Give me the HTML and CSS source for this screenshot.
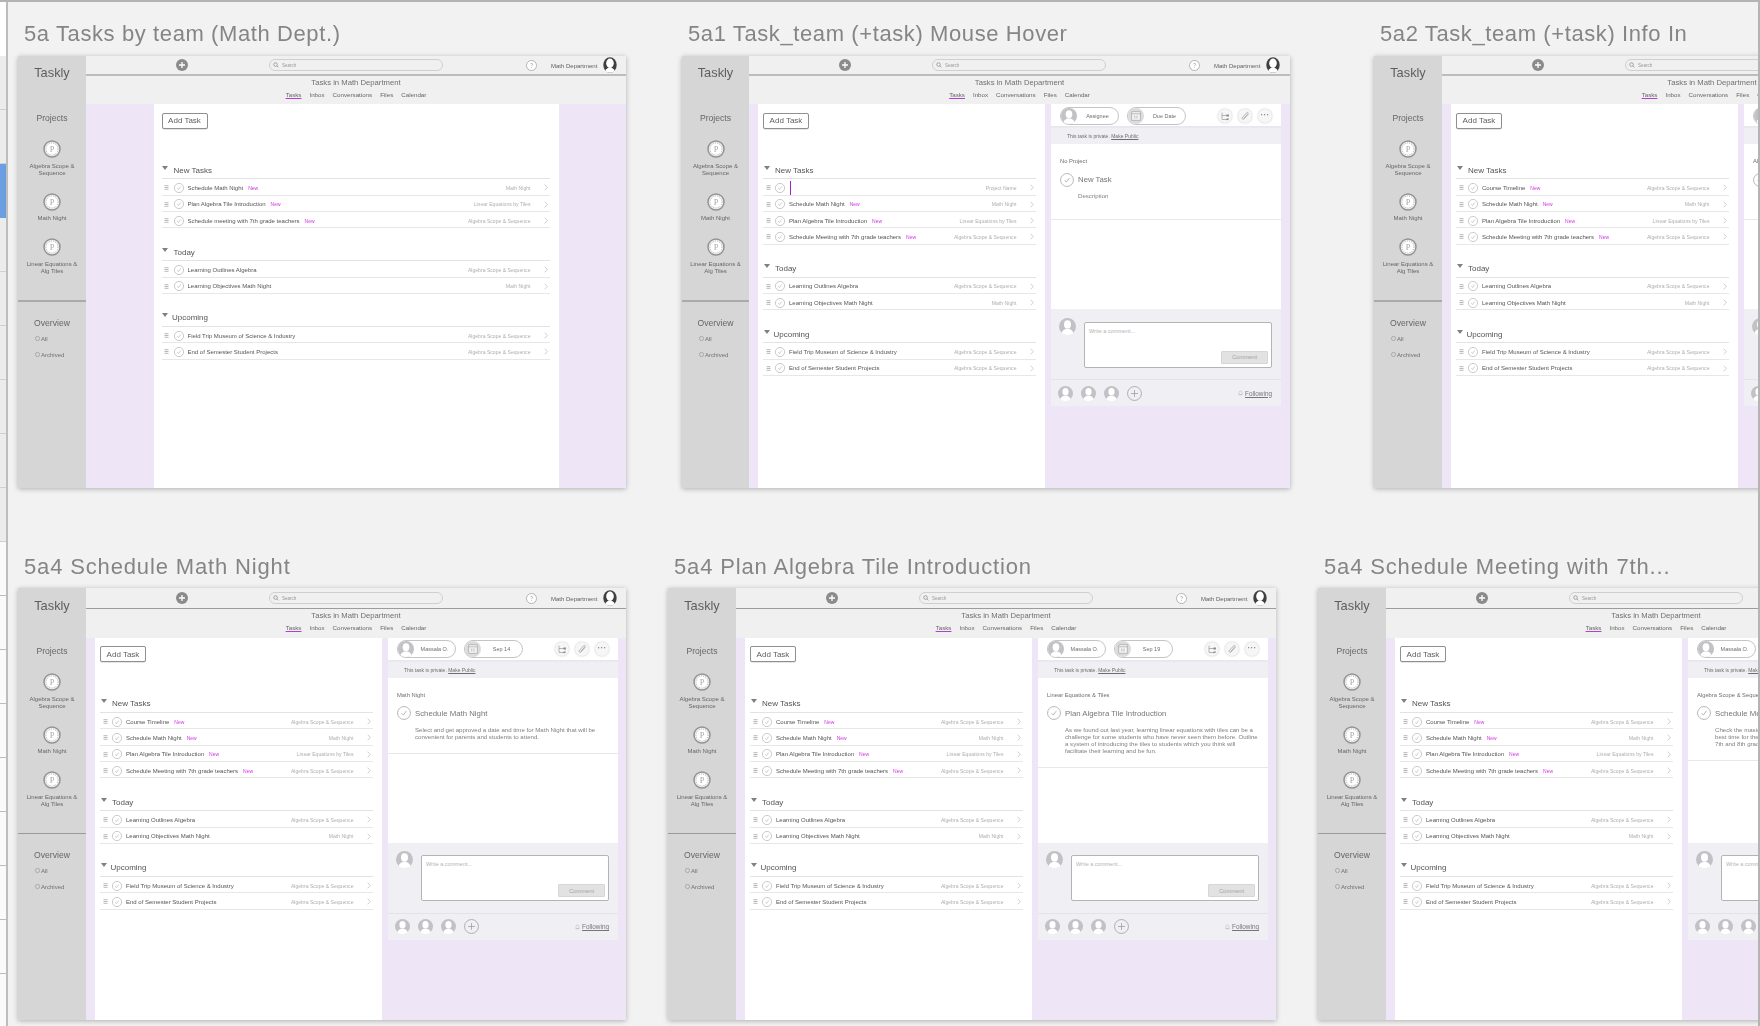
FILE: index.html
```html
<!DOCTYPE HTML>
<html><head>
  <meta charset="utf-8">
  <title>Taskly artboards</title>
  <link rel="stylesheet" href="styles.css">
</head>
<body>

<svg class="defs" xmlns="http://www.w3.org/2000/svg">
  <symbol id="badge" viewBox="0 0 18 18"><circle cx="9" cy="9" r="8" fill="#f4f4f4" stroke="#939393" stroke-width="1.5"/><circle cx="9" cy="9" r="6" fill="#fff" stroke="#a5a5a5" stroke-width=".9" stroke-dasharray="1 1.2"/><text x="9" y="12" text-anchor="middle" font-family="Liberation Serif" font-size="8.5" fill="#aaa">P</text></symbol>
  <symbol id="plus" viewBox="0 0 12 12"><circle cx="6" cy="6" r="6" fill="#8b8b8b"/><path d="M6 3v6M3 6h6" stroke="#fff" stroke-width="1.3"/></symbol>
  <symbol id="search" viewBox="0 0 8 8"><circle cx="3.4" cy="3.4" r="2.4" fill="none" stroke="#777" stroke-width=".8"/><path d="M5.2 5.2l2 2" stroke="#777" stroke-width=".8"/></symbol>
  <symbol id="help" viewBox="0 0 11 11"><circle cx="5.5" cy="5.5" r="5" fill="#fff" stroke="#999" stroke-width=".7"/><path d="M4.3 4.2c.2-1 2.300-1 2.400.100 0 .8-1.200.9-1.200 1.800M5.500 7.300v.7" fill="none" stroke="#888" stroke-width=".6"/></symbol>
  <symbol id="owner" viewBox="0 0 14 16"><ellipse cx="7" cy="8" rx="6.700" ry="7.700" fill="#3f3f3f"/><ellipse cx="7" cy="6.300" rx="3.800" ry="4.700" fill="#fff"/><path d="M2.300 14c.5-2 2.500-2.800 3.400-3.400h2.600c.9.600 2.900 1.400 3.400 3.400-1.200 1.200-3 1.700-4.700 1.700S3.500 15.200 2.300 14z" fill="#fff"/></symbol>
  <symbol id="drag" viewBox="0 0 5 5"><path d="M.5 .7h4M.5 2.500h4M.5 4.300h4" stroke="#999" stroke-width=".7"/></symbol>
  <symbol id="tick" viewBox="0 0 10 10"><circle cx="5" cy="5" r="4.600" fill="#fff" stroke="#aaa" stroke-width=".6"/><path d="M3.300 5.200l1.200 1.300 2.200-3" fill="none" stroke="#aaa" stroke-width=".6"/></symbol>
  <symbol id="chev" viewBox="0 0 4 7"><path d="M.7 .7l2.600 2.800-2.600 2.800" fill="none" stroke="#bbb" stroke-width=".7"/></symbol>
  <symbol id="person" viewBox="0 0 16 16"><circle cx="8" cy="8" r="8" fill="#c2c1c5"/><ellipse cx="8" cy="6.200" rx="3.300" ry="4" fill="#fff"/><path d="M2.500 14c.6-2.400 2.400-2.800 3.700-3.600h3.600c1.300.8 3.100 1.200 3.700 3.600-1.400 1.300-3.400 2-5.500 2s-4.100-.7-5.500-2z" fill="#fff"/></symbol>
  <symbol id="cal" viewBox="0 0 16 16"><circle cx="8" cy="8" r="8" fill="#dcdcdf"/><rect x="3.800" y="3.800" width="8.400" height="8.400" fill="#f4f4f4" stroke="#999" stroke-width=".6"/><path d="M3.800 5.800h8.400M6.800 7.500v3M9 7.500v3" stroke="#999" stroke-width=".6"/></symbol>
  <symbol id="tree" viewBox="0 0 10 10"><path d="M2 1.500v7h5M2 4.500h5" fill="none" stroke="#999" stroke-width=".7"/><rect x="6.500" y="3.500" width="2.400" height="2" fill="#888"/><rect x="6.500" y="7.500" width="2.400" height="2" fill="#888"/></symbol>
  <symbol id="clip" viewBox="0 0 10 10"><path d="M8.300 3.200L4 8c-1 1-2.600-.4-1.600-1.600L6.800 1.600c.7-.8 1.900.2 1.200 1.100L3.800 7.300" fill="none" stroke="#999" stroke-width=".7"/></symbol>
  <symbol id="add" viewBox="0 0 14 14"><circle cx="7" cy="7" r="6.500" fill="none" stroke="#a5a5a8" stroke-width=".8"/><path d="M7 3.800v6.400M3.800 7h6.400" stroke="#a5a5a8" stroke-width=".8"/></symbol>
  <symbol id="bell" viewBox="0 0 6 7"><path d="M1.200 5.500V2.800C1.200 .6 4.800 .6 4.800 2.800v2.700zM.7 5.500h4.600" fill="none" stroke="#aaa" stroke-width=".5"/></symbol>
</svg>

<div class="canvas">
<div class="layers">
  <div class="lyr"></div><div class="lyr"></div><div class="lyr sel"></div><div class="lyr"></div><div class="lyr"></div><div class="lyr"></div><div class="lyr"></div><div class="lyr"></div><div class="lyr"></div><div class="lyr w"></div><div class="lyr w"></div><div class="lyr w"></div><div class="lyr w"></div><div class="lyr w"></div><div class="lyr w"></div><div class="lyr w"></div><div class="lyr w"></div><div class="lyr w"></div><div class="lyr w"></div>
</div>

<!-- 5a -->
<section class="board b1">
  <h2 class="title">5a Tasks by team (Math Dept.)</h2>
  <div class="frame">
    <aside class="side">
      <div class="logo">Taskly</div>
      <div class="side-h">Projects</div>
      <div class="proj-item"><svg class="badge"><use href="#badge"/></svg><p>Algebra Scope &amp;<br>Sequence</p></div>
      <div class="proj-item"><svg class="badge"><use href="#badge"/></svg><p>Math Night</p></div>
      <div class="proj-item"><svg class="badge"><use href="#badge"/></svg><p>Linear Equations &amp;<br>Alg Tiles</p></div>
      <hr class="side-rule">
      <div class="side-h ov">Overview</div>
      <div class="ov-item">All</div>
      <div class="ov-item">Archived</div>
    </aside>
    <div class="main">
      <div class="topbar"><svg class="plus"><use href="#plus"/></svg><div class="search"><svg><use href="#search"/></svg>Search</div><svg class="help"><use href="#help"/></svg><span class="dept">Math Department</span><svg class="owner"><use href="#owner"/></svg></div>
      <div class="subhead"><div class="sub-title">Tasks in Math Department</div><nav class="tabs"><a class="on">Tasks</a><a>Inbox</a><a>Conversations</a><a>Files</a><a>Calendar</a></nav></div>
      <div class="content">
        <div class="list-col">
          <button class="add-task">Add Task</button>
          <h3 class="sec first">New Tasks</h3>
          <ul>
            <li><svg class="drag"><use href="#drag"/></svg><svg class="tick"><use href="#tick"/></svg><span>Schedule Math Night</span><b>New</b><i>Math Night</i><svg class="chev"><use href="#chev"/></svg></li>
            <li><svg class="drag"><use href="#drag"/></svg><svg class="tick"><use href="#tick"/></svg><span>Plan Algebra Tile Introduction</span><b>New</b><i>Linear Equations by Tiles</i><svg class="chev"><use href="#chev"/></svg></li>
            <li><svg class="drag"><use href="#drag"/></svg><svg class="tick"><use href="#tick"/></svg><span>Schedule meeting with 7th grade teachers</span><b>New</b><i>Algebra Scope &amp; Sequence</i><svg class="chev"><use href="#chev"/></svg></li>
          </ul>
          <h3 class="sec">Today</h3>
          <ul>
            <li><svg class="drag"><use href="#drag"/></svg><svg class="tick"><use href="#tick"/></svg><span>Learning Outlines Algebra</span><i>Algebra Scope &amp; Sequence</i><svg class="chev"><use href="#chev"/></svg></li>
            <li><svg class="drag"><use href="#drag"/></svg><svg class="tick"><use href="#tick"/></svg><span>Learning Objectives Math Night</span><i>Math Night</i><svg class="chev"><use href="#chev"/></svg></li>
          </ul>
          <h3 class="sec">Upcoming</h3>
          <ul>
            <li><svg class="drag"><use href="#drag"/></svg><svg class="tick"><use href="#tick"/></svg><span>Field Trip Museum of Science &amp; Industry</span><i>Algebra Scope &amp; Sequence</i><svg class="chev"><use href="#chev"/></svg></li>
            <li><svg class="drag"><use href="#drag"/></svg><svg class="tick"><use href="#tick"/></svg><span>End of Semester Student Projects</span><i>Algebra Scope &amp; Sequence</i><svg class="chev"><use href="#chev"/></svg></li>
          </ul>
        </div>
      </div>
    </div>
  </div>
</section>

<!-- 5a1 -->
<section class="board b2">
  <h2 class="title">5a1 Task_team (+task) Mouse Hover</h2>
  <div class="frame">
    <aside class="side">
      <div class="logo">Taskly</div>
      <div class="side-h">Projects</div>
      <div class="proj-item"><svg class="badge"><use href="#badge"/></svg><p>Algebra Scope &amp;<br>Sequence</p></div>
      <div class="proj-item"><svg class="badge"><use href="#badge"/></svg><p>Math Night</p></div>
      <div class="proj-item"><svg class="badge"><use href="#badge"/></svg><p>Linear Equations &amp;<br>Alg Tiles</p></div>
      <hr class="side-rule">
      <div class="side-h ov">Overview</div>
      <div class="ov-item">All</div>
      <div class="ov-item">Archived</div>
    </aside>
    <div class="main">
      <div class="topbar"><svg class="plus"><use href="#plus"/></svg><div class="search"><svg><use href="#search"/></svg>Search</div><svg class="help"><use href="#help"/></svg><span class="dept">Math Department</span><svg class="owner"><use href="#owner"/></svg></div>
      <div class="subhead"><div class="sub-title">Tasks in Math Department</div><nav class="tabs"><a class="on">Tasks</a><a>Inbox</a><a>Conversations</a><a>Files</a><a>Calendar</a></nav></div>
      <div class="content split">
        <div class="list-col">
          <button class="add-task">Add Task</button>
          <h3 class="sec first">New Tasks</h3>
          <ul>
            <li><svg class="drag"><use href="#drag"/></svg><svg class="tick"><use href="#tick"/></svg><span class="caret"></span><i>Project Name</i><svg class="chev"><use href="#chev"/></svg></li>
            <li><svg class="drag"><use href="#drag"/></svg><svg class="tick"><use href="#tick"/></svg><span>Schedule Math Night</span><b>New</b><i>Math Night</i><svg class="chev"><use href="#chev"/></svg></li>
            <li><svg class="drag"><use href="#drag"/></svg><svg class="tick"><use href="#tick"/></svg><span>Plan Algebra Tile Introduction</span><b>New</b><i>Linear Equations by Tiles</i><svg class="chev"><use href="#chev"/></svg></li>
            <li><svg class="drag"><use href="#drag"/></svg><svg class="tick"><use href="#tick"/></svg><span>Schedule Meeting with 7th grade teachers</span><b>New</b><i>Algebra Scope &amp; Sequence</i><svg class="chev"><use href="#chev"/></svg></li>
          </ul>
          <h3 class="sec">Today</h3>
          <ul>
            <li><svg class="drag"><use href="#drag"/></svg><svg class="tick"><use href="#tick"/></svg><span>Learning Outlines Algebra</span><i>Algebra Scope &amp; Sequence</i><svg class="chev"><use href="#chev"/></svg></li>
            <li><svg class="drag"><use href="#drag"/></svg><svg class="tick"><use href="#tick"/></svg><span>Learning Objectives Math Night</span><i>Math Night</i><svg class="chev"><use href="#chev"/></svg></li>
          </ul>
          <h3 class="sec">Upcoming</h3>
          <ul>
            <li><svg class="drag"><use href="#drag"/></svg><svg class="tick"><use href="#tick"/></svg><span>Field Trip Museum of Science &amp; Industry</span><i>Algebra Scope &amp; Sequence</i><svg class="chev"><use href="#chev"/></svg></li>
            <li><svg class="drag"><use href="#drag"/></svg><svg class="tick"><use href="#tick"/></svg><span>End of Semester Student Projects</span><i>Algebra Scope &amp; Sequence</i><svg class="chev"><use href="#chev"/></svg></li>
          </ul>
        </div>
        <div class="detail">
          <div class="d-head"><div class="pill"><svg><use href="#person"/></svg><span>Assignee</span></div><div class="pill"><svg><use href="#cal"/></svg><span>Due Date</span></div><div class="d-tools"><svg><use href="#tree"/></svg><svg><use href="#clip"/></svg><em>&middot;&middot;&middot;</em></div></div>
          <div class="strip">This task is private. <u>Make Public</u></div>
          <div class="d-body"><div class="task"><div class="t-proj">No Project</div><div class="t-name"><svg><use href="#tick"/></svg>New Task</div><p class="t-desc">Description</p></div></div>
          <div class="d-comment"><svg class="c-av"><use href="#person"/></svg><div class="c-box"><span>Write a comment...</span><button>Comment</button></div></div>
          <div class="d-foot"><svg><use href="#person"/></svg><svg><use href="#person"/></svg><svg><use href="#person"/></svg><svg class="f-add"><use href="#add"/></svg><span class="follow"><svg><use href="#bell"/></svg><u>Following</u></span></div>
        </div>
      </div>
    </div>
  </div>
</section>

<!-- 5a2 -->
<section class="board b3">
  <h2 class="title">5a2 Task_team (+task) Info In</h2>
  <div class="frame">
    <aside class="side">
      <div class="logo">Taskly</div>
      <div class="side-h">Projects</div>
      <div class="proj-item"><svg class="badge"><use href="#badge"/></svg><p>Algebra Scope &amp;<br>Sequence</p></div>
      <div class="proj-item"><svg class="badge"><use href="#badge"/></svg><p>Math Night</p></div>
      <div class="proj-item"><svg class="badge"><use href="#badge"/></svg><p>Linear Equations &amp;<br>Alg Tiles</p></div>
      <hr class="side-rule">
      <div class="side-h ov">Overview</div>
      <div class="ov-item">All</div>
      <div class="ov-item">Archived</div>
    </aside>
    <div class="main">
      <div class="topbar"><svg class="plus"><use href="#plus"/></svg><div class="search"><svg><use href="#search"/></svg>Search</div><svg class="help"><use href="#help"/></svg><span class="dept">Math Department</span><svg class="owner"><use href="#owner"/></svg></div>
      <div class="subhead"><div class="sub-title">Tasks in Math Department</div><nav class="tabs"><a class="on">Tasks</a><a>Inbox</a><a>Conversations</a><a>Files</a><a>Calendar</a></nav></div>
      <div class="content split">
        <div class="list-col">
          <button class="add-task">Add Task</button>
          <h3 class="sec first">New Tasks</h3>
          <ul>
            <li><svg class="drag"><use href="#drag"/></svg><svg class="tick"><use href="#tick"/></svg><span>Course Timeline</span><b>New</b><i>Algebra Scope &amp; Sequence</i><svg class="chev"><use href="#chev"/></svg></li>
            <li><svg class="drag"><use href="#drag"/></svg><svg class="tick"><use href="#tick"/></svg><span>Schedule Math Night</span><b>New</b><i>Math Night</i><svg class="chev"><use href="#chev"/></svg></li>
            <li><svg class="drag"><use href="#drag"/></svg><svg class="tick"><use href="#tick"/></svg><span>Plan Algebra Tile Introduction</span><b>New</b><i>Linear Equations by Tiles</i><svg class="chev"><use href="#chev"/></svg></li>
            <li><svg class="drag"><use href="#drag"/></svg><svg class="tick"><use href="#tick"/></svg><span>Schedule Meeting with 7th grade teachers</span><b>New</b><i>Algebra Scope &amp; Sequence</i><svg class="chev"><use href="#chev"/></svg></li>
          </ul>
          <h3 class="sec">Today</h3>
          <ul>
            <li><svg class="drag"><use href="#drag"/></svg><svg class="tick"><use href="#tick"/></svg><span>Learning Outlines Algebra</span><i>Algebra Scope &amp; Sequence</i><svg class="chev"><use href="#chev"/></svg></li>
            <li><svg class="drag"><use href="#drag"/></svg><svg class="tick"><use href="#tick"/></svg><span>Learning Objectives Math Night</span><i>Math Night</i><svg class="chev"><use href="#chev"/></svg></li>
          </ul>
          <h3 class="sec">Upcoming</h3>
          <ul>
            <li><svg class="drag"><use href="#drag"/></svg><svg class="tick"><use href="#tick"/></svg><span>Field Trip Museum of Science &amp; Industry</span><i>Algebra Scope &amp; Sequence</i><svg class="chev"><use href="#chev"/></svg></li>
            <li><svg class="drag"><use href="#drag"/></svg><svg class="tick"><use href="#tick"/></svg><span>End of Semester Student Projects</span><i>Algebra Scope &amp; Sequence</i><svg class="chev"><use href="#chev"/></svg></li>
          </ul>
        </div>
        <div class="detail">
          <div class="d-head"><div class="pill"><svg><use href="#person"/></svg><span>Assignee</span></div></div>
          <div class="strip"></div>
          <div class="d-body"><div class="task"><div class="t-proj">Algebra Scope &amp; Sequence</div><div class="t-name"><svg><use href="#tick"/></svg>Course Timeline</div></div></div>
          <div class="d-comment"><svg class="c-av"><use href="#person"/></svg></div>
          <div class="d-foot"><svg><use href="#person"/></svg></div>
        </div>
      </div>
    </div>
  </div>
</section>

<!-- 5a4 -->
<section class="board b4 thin">
  <h2 class="title">5a4 Schedule Math Night</h2>
  <div class="frame">
    <aside class="side">
      <div class="logo">Taskly</div>
      <div class="side-h">Projects</div>
      <div class="proj-item"><svg class="badge"><use href="#badge"/></svg><p>Algebra Scope &amp;<br>Sequence</p></div>
      <div class="proj-item"><svg class="badge"><use href="#badge"/></svg><p>Math Night</p></div>
      <div class="proj-item"><svg class="badge"><use href="#badge"/></svg><p>Linear Equations &amp;<br>Alg Tiles</p></div>
      <hr class="side-rule">
      <div class="side-h ov">Overview</div>
      <div class="ov-item">All</div>
      <div class="ov-item">Archived</div>
    </aside>
    <div class="main">
      <div class="topbar"><svg class="plus"><use href="#plus"/></svg><div class="search"><svg><use href="#search"/></svg>Search</div><svg class="help"><use href="#help"/></svg><span class="dept">Math Department</span><svg class="owner"><use href="#owner"/></svg></div>
      <div class="subhead"><div class="sub-title">Tasks in Math Department</div><nav class="tabs"><a class="on">Tasks</a><a>Inbox</a><a>Conversations</a><a>Files</a><a>Calendar</a></nav></div>
      <div class="content split">
        <div class="list-col">
          <button class="add-task">Add Task</button>
          <h3 class="sec first">New Tasks</h3>
          <ul>
            <li><svg class="drag"><use href="#drag"/></svg><svg class="tick"><use href="#tick"/></svg><span>Course Timeline</span><b>New</b><i>Algebra Scope &amp; Sequence</i><svg class="chev"><use href="#chev"/></svg></li>
            <li><svg class="drag"><use href="#drag"/></svg><svg class="tick"><use href="#tick"/></svg><span>Schedule Math Night</span><b>New</b><i>Math Night</i><svg class="chev"><use href="#chev"/></svg></li>
            <li><svg class="drag"><use href="#drag"/></svg><svg class="tick"><use href="#tick"/></svg><span>Plan Algebra Tile Introduction</span><b>New</b><i>Linear Equations by Tiles</i><svg class="chev"><use href="#chev"/></svg></li>
            <li><svg class="drag"><use href="#drag"/></svg><svg class="tick"><use href="#tick"/></svg><span>Schedule Meeting with 7th grade teachers</span><b>New</b><i>Algebra Scope &amp; Sequence</i><svg class="chev"><use href="#chev"/></svg></li>
          </ul>
          <h3 class="sec">Today</h3>
          <ul>
            <li><svg class="drag"><use href="#drag"/></svg><svg class="tick"><use href="#tick"/></svg><span>Learning Outlines Algebra</span><i>Algebra Scope &amp; Sequence</i><svg class="chev"><use href="#chev"/></svg></li>
            <li><svg class="drag"><use href="#drag"/></svg><svg class="tick"><use href="#tick"/></svg><span>Learning Objectives Math Night</span><i>Math Night</i><svg class="chev"><use href="#chev"/></svg></li>
          </ul>
          <h3 class="sec">Upcoming</h3>
          <ul>
            <li><svg class="drag"><use href="#drag"/></svg><svg class="tick"><use href="#tick"/></svg><span>Field Trip Museum of Science &amp; Industry</span><i>Algebra Scope &amp; Sequence</i><svg class="chev"><use href="#chev"/></svg></li>
            <li><svg class="drag"><use href="#drag"/></svg><svg class="tick"><use href="#tick"/></svg><span>End of Semester Student Projects</span><i>Algebra Scope &amp; Sequence</i><svg class="chev"><use href="#chev"/></svg></li>
          </ul>
        </div>
        <div class="detail">
          <div class="d-head"><div class="pill"><svg><use href="#person"/></svg><span>Massala O.</span></div><div class="pill"><svg><use href="#cal"/></svg><span>Sep 14</span></div><div class="d-tools"><svg><use href="#tree"/></svg><svg><use href="#clip"/></svg><em>&middot;&middot;&middot;</em></div></div>
          <div class="strip">This task is private. <u>Make Public</u></div>
          <div class="d-body"><div class="task"><div class="t-proj">Math Night</div><div class="t-name"><svg><use href="#tick"/></svg>Schedule Math Night</div><p class="t-desc">Select and get approved a date and time for Math Night that will be<br>convenient for parents and students to attend.</p></div></div>
          <div class="d-comment"><svg class="c-av"><use href="#person"/></svg><div class="c-box"><span>Write a comment...</span><button>Comment</button></div></div>
          <div class="d-foot"><svg><use href="#person"/></svg><svg><use href="#person"/></svg><svg><use href="#person"/></svg><svg class="f-add"><use href="#add"/></svg><span class="follow"><svg><use href="#bell"/></svg><u>Following</u></span></div>
        </div>
      </div>
    </div>
  </div>
</section>

<!-- 5a4 -->
<section class="board b5 thin">
  <h2 class="title">5a4 Plan Algebra Tile Introduction</h2>
  <div class="frame">
    <aside class="side">
      <div class="logo">Taskly</div>
      <div class="side-h">Projects</div>
      <div class="proj-item"><svg class="badge"><use href="#badge"/></svg><p>Algebra Scope &amp;<br>Sequence</p></div>
      <div class="proj-item"><svg class="badge"><use href="#badge"/></svg><p>Math Night</p></div>
      <div class="proj-item"><svg class="badge"><use href="#badge"/></svg><p>Linear Equations &amp;<br>Alg Tiles</p></div>
      <hr class="side-rule">
      <div class="side-h ov">Overview</div>
      <div class="ov-item">All</div>
      <div class="ov-item">Archived</div>
    </aside>
    <div class="main">
      <div class="topbar"><svg class="plus"><use href="#plus"/></svg><div class="search"><svg><use href="#search"/></svg>Search</div><svg class="help"><use href="#help"/></svg><span class="dept">Math Department</span><svg class="owner"><use href="#owner"/></svg></div>
      <div class="subhead"><div class="sub-title">Tasks in Math Department</div><nav class="tabs"><a class="on">Tasks</a><a>Inbox</a><a>Conversations</a><a>Files</a><a>Calendar</a></nav></div>
      <div class="content split">
        <div class="list-col">
          <button class="add-task">Add Task</button>
          <h3 class="sec first">New Tasks</h3>
          <ul>
            <li><svg class="drag"><use href="#drag"/></svg><svg class="tick"><use href="#tick"/></svg><span>Course Timeline</span><b>New</b><i>Algebra Scope &amp; Sequence</i><svg class="chev"><use href="#chev"/></svg></li>
            <li><svg class="drag"><use href="#drag"/></svg><svg class="tick"><use href="#tick"/></svg><span>Schedule Math Night</span><b>New</b><i>Math Night</i><svg class="chev"><use href="#chev"/></svg></li>
            <li><svg class="drag"><use href="#drag"/></svg><svg class="tick"><use href="#tick"/></svg><span>Plan Algebra Tile Introduction</span><b>New</b><i>Linear Equations by Tiles</i><svg class="chev"><use href="#chev"/></svg></li>
            <li><svg class="drag"><use href="#drag"/></svg><svg class="tick"><use href="#tick"/></svg><span>Schedule Meeting with 7th grade teachers</span><b>New</b><i>Algebra Scope &amp; Sequence</i><svg class="chev"><use href="#chev"/></svg></li>
          </ul>
          <h3 class="sec">Today</h3>
          <ul>
            <li><svg class="drag"><use href="#drag"/></svg><svg class="tick"><use href="#tick"/></svg><span>Learning Outlines Algebra</span><i>Algebra Scope &amp; Sequence</i><svg class="chev"><use href="#chev"/></svg></li>
            <li><svg class="drag"><use href="#drag"/></svg><svg class="tick"><use href="#tick"/></svg><span>Learning Objectives Math Night</span><i>Math Night</i><svg class="chev"><use href="#chev"/></svg></li>
          </ul>
          <h3 class="sec">Upcoming</h3>
          <ul>
            <li><svg class="drag"><use href="#drag"/></svg><svg class="tick"><use href="#tick"/></svg><span>Field Trip Museum of Science &amp; Industry</span><i>Algebra Scope &amp; Sequence</i><svg class="chev"><use href="#chev"/></svg></li>
            <li><svg class="drag"><use href="#drag"/></svg><svg class="tick"><use href="#tick"/></svg><span>End of Semester Student Projects</span><i>Algebra Scope &amp; Sequence</i><svg class="chev"><use href="#chev"/></svg></li>
          </ul>
        </div>
        <div class="detail">
          <div class="d-head"><div class="pill"><svg><use href="#person"/></svg><span>Massala O.</span></div><div class="pill"><svg><use href="#cal"/></svg><span>Sep 19</span></div><div class="d-tools"><svg><use href="#tree"/></svg><svg><use href="#clip"/></svg><em>&middot;&middot;&middot;</em></div></div>
          <div class="strip">This task is private. <u>Make Public</u></div>
          <div class="d-body"><div class="task"><div class="t-proj">Linear Equations &amp; Tiles</div><div class="t-name"><svg><use href="#tick"/></svg>Plan Algebra Tile Introduction</div><p class="t-desc">As we found out last year, learning linear equations with tiles can be a<br>challenge for some students who have never seen them before. Outline<br>a system of introducing the tiles to students which you think will<br>facilitate their learning and be fun.</p></div></div>
          <div class="d-comment"><svg class="c-av"><use href="#person"/></svg><div class="c-box"><span>Write a comment...</span><button>Comment</button></div></div>
          <div class="d-foot"><svg><use href="#person"/></svg><svg><use href="#person"/></svg><svg><use href="#person"/></svg><svg class="f-add"><use href="#add"/></svg><span class="follow"><svg><use href="#bell"/></svg><u>Following</u></span></div>
        </div>
      </div>
    </div>
  </div>
</section>

<!-- 5a4 -->
<section class="board b6 thin">
  <h2 class="title">5a4 Schedule Meeting with 7th...</h2>
  <div class="frame">
    <aside class="side">
      <div class="logo">Taskly</div>
      <div class="side-h">Projects</div>
      <div class="proj-item"><svg class="badge"><use href="#badge"/></svg><p>Algebra Scope &amp;<br>Sequence</p></div>
      <div class="proj-item"><svg class="badge"><use href="#badge"/></svg><p>Math Night</p></div>
      <div class="proj-item"><svg class="badge"><use href="#badge"/></svg><p>Linear Equations &amp;<br>Alg Tiles</p></div>
      <hr class="side-rule">
      <div class="side-h ov">Overview</div>
      <div class="ov-item">All</div>
      <div class="ov-item">Archived</div>
    </aside>
    <div class="main">
      <div class="topbar"><svg class="plus"><use href="#plus"/></svg><div class="search"><svg><use href="#search"/></svg>Search</div><svg class="help"><use href="#help"/></svg><span class="dept">Math Department</span><svg class="owner"><use href="#owner"/></svg></div>
      <div class="subhead"><div class="sub-title">Tasks in Math Department</div><nav class="tabs"><a class="on">Tasks</a><a>Inbox</a><a>Conversations</a><a>Files</a><a>Calendar</a></nav></div>
      <div class="content split">
        <div class="list-col">
          <button class="add-task">Add Task</button>
          <h3 class="sec first">New Tasks</h3>
          <ul>
            <li><svg class="drag"><use href="#drag"/></svg><svg class="tick"><use href="#tick"/></svg><span>Course Timeline</span><b>New</b><i>Algebra Scope &amp; Sequence</i><svg class="chev"><use href="#chev"/></svg></li>
            <li><svg class="drag"><use href="#drag"/></svg><svg class="tick"><use href="#tick"/></svg><span>Schedule Math Night</span><b>New</b><i>Math Night</i><svg class="chev"><use href="#chev"/></svg></li>
            <li><svg class="drag"><use href="#drag"/></svg><svg class="tick"><use href="#tick"/></svg><span>Plan Algebra Tile Introduction</span><b>New</b><i>Linear Equations by Tiles</i><svg class="chev"><use href="#chev"/></svg></li>
            <li><svg class="drag"><use href="#drag"/></svg><svg class="tick"><use href="#tick"/></svg><span>Schedule Meeting with 7th grade teachers</span><b>New</b><i>Algebra Scope &amp; Sequence</i><svg class="chev"><use href="#chev"/></svg></li>
          </ul>
          <h3 class="sec">Today</h3>
          <ul>
            <li><svg class="drag"><use href="#drag"/></svg><svg class="tick"><use href="#tick"/></svg><span>Learning Outlines Algebra</span><i>Algebra Scope &amp; Sequence</i><svg class="chev"><use href="#chev"/></svg></li>
            <li><svg class="drag"><use href="#drag"/></svg><svg class="tick"><use href="#tick"/></svg><span>Learning Objectives Math Night</span><i>Math Night</i><svg class="chev"><use href="#chev"/></svg></li>
          </ul>
          <h3 class="sec">Upcoming</h3>
          <ul>
            <li><svg class="drag"><use href="#drag"/></svg><svg class="tick"><use href="#tick"/></svg><span>Field Trip Museum of Science &amp; Industry</span><i>Algebra Scope &amp; Sequence</i><svg class="chev"><use href="#chev"/></svg></li>
            <li><svg class="drag"><use href="#drag"/></svg><svg class="tick"><use href="#tick"/></svg><span>End of Semester Student Projects</span><i>Algebra Scope &amp; Sequence</i><svg class="chev"><use href="#chev"/></svg></li>
          </ul>
        </div>
        <div class="detail">
          <div class="d-head"><div class="pill"><svg><use href="#person"/></svg><span>Massala O.</span></div></div>
          <div class="strip">This task is private. <u>Make Public</u></div>
          <div class="d-body"><div class="task"><div class="t-proj">Algebra Scope &amp; Sequence</div><div class="t-name"><svg><use href="#tick"/></svg>Schedule Meeting with 7th grade teachers</div><p class="t-desc">Check the master schedule to find the<br>best time for the meeting with all of the<br>7th and 8th grade teachers.</p></div></div>
          <div class="d-comment"><svg class="c-av"><use href="#person"/></svg><div class="c-box"><span>Write a comment...</span></div></div>
          <div class="d-foot"><svg><use href="#person"/></svg><svg><use href="#person"/></svg><svg><use href="#person"/></svg></div>
        </div>
      </div>
    </div>
  </div>
</section>

</div>

</body>
</html>
```

FILE: styles.css
```css
html,body {
  margin:0; padding:0;
  height:100%;
  background:#f2f2f2;
  font-family:"Liberation Sans", Arial, sans-serif;
  overflow:hidden;
}

.defs { position:absolute; width:0; height:0; }

.canvas {
  position:relative;
  width:1758px; height:1024px;
  overflow:hidden;
  border-top:2px solid #b4b4b4;
  border-right:2px solid #b4b4b4;
}

/* layer list peeking in on the left */
.layers {
  width:6px; height:100%;
  background:#fff;
  border-right:2px solid #bdbdbd;
  padding-top:54px;
  overflow:hidden;
}
.lyr { height:53px; background:#ececec; border-bottom:1px solid #d0d0d0; }
.lyr.sel { background:#6c9fe2; border-color:#6c9fe2; }
.lyr.w { background:#fafafa; border-color:#bbb; }

/* artboards sit on a free canvas */
.board { position:absolute; width:608px; filter:blur(.35px); }
.b1 { left:18px; top:18px; }
.b2 { left:682px; top:18px; }
.b3 { left:1374px; top:18px; }
.b4 { left:18px; top:550px; }
.b5 { left:668px; top:550px; }
.b6 { left:1318px; top:550px; }

.title {
  margin:0 0 8px 6px;
  height:28px;
  font-size:22px; line-height:28px;
  font-weight:normal;
  letter-spacing:.6px;
  color:#858585;
  white-space:nowrap;
}

.frame {
  display:flex;
  height:432px;
  background:#f1f0f1;
  box-shadow:0 1px 5px rgba(0,0,0,.28);
}

/* sidebar */
.side {
  width:68px; flex:none;
  background:#d6d6d6;
  padding-top:9px;
  box-sizing:border-box;
  text-align:center;
  color:#666;
}
.b2 .side { width:67px; }
.logo { font-size:12.800px; line-height:16px; color:#5e5e5e; }
.side-h { margin-top:31px; font-size:8.600px; line-height:12px; color:#666; }
.side-h.ov { margin-top:15px; }
.proj-item { margin-top:16px; }
.badge { display:block; width:18px; height:18px; margin:0 auto; }
.proj-item p { margin:4.500px 0 0; font-size:6px; line-height:7px; color:#666; white-space:nowrap; }
.side-rule { margin:25.500px 0 0; height:2px; border:0; background:#aaa; }
.ov-item { margin:8px 0 0 17px; font-size:6px; line-height:8px; color:#707070; text-align:left; }
.side-h.ov + .ov-item { margin-top:6px; }
.ov-item:before {
  content:""; display:inline-block;
  width:2.500px; height:2.500px; margin-right:1.500px;
  border:.5px solid #aaa; border-radius:50%;
  vertical-align:.5px;
}

/* main column */
.main { flex:1; display:flex; flex-direction:column; min-width:0; }
.topbar {
  display:flex; align-items:center;
  height:18px;
  border-bottom:2px solid #bcbcbc;
}
.plus { width:12px; height:12px; margin:0 0 0 90px; flex:none; }
.search {
  display:flex; align-items:center;
  width:174px; height:12px; margin-left:81px; padding-left:3px;
  box-sizing:border-box;
  border:1px solid #cfcfcf; border-radius:6px;
  font-size:4.500px; color:#999;
}
.search svg { width:6px; height:6px; margin-right:3px; }
.help { width:11px; height:11px; margin:1px 0 0 82.500px; flex:none; }
.dept { margin:1px 0 0 14.500px; width:46.500px; font-size:6px; color:#5e5e5e; white-space:nowrap; }
.owner { width:14px; height:16px; margin:0 0 0 5px; flex:none; }

.subhead { height:28px; text-align:center; flex:none; }
.sub-title { padding-top:2px; font-size:7.700px; line-height:10px; color:#707070; }
.tabs {
  display:flex; justify-content:center; gap:8px;
  margin-top:3px;
  font-size:6.200px; line-height:8px; color:#666;
}
.tabs .on { text-decoration:underline; text-decoration-color:#b23fd0; }

.content {
  flex:1; display:flex; justify-content:center;
  background:#eee6f6;
  min-height:0;
}
.content.split { justify-content:flex-start; padding-left:8.500px; }

.list-col {
  width:405px;
  padding:8.700px 9px 0 8px;
  box-sizing:border-box;
  background:#fff;
  flex:none;
}
.split .list-col { width:287px; padding-left:5.500px; }

.add-task {
  display:block;
  width:46px; height:16px; padding:0;
  background:#fff;
  border:1px solid #8f8f8f; border-radius:2px;
  box-shadow:0 .5px 0 #ccc;
  font:8px "Liberation Sans", Arial, sans-serif;
  color:#5e5e5e;
}

.sec {
  display:flex; align-items:center;
  height:17px; margin:16px 0 0; padding-left:12px;
  box-sizing:border-box;
  border-bottom:1px solid #e3e3e3;
  position:relative;
  font-size:8px; font-weight:normal; color:#555;
}
.sec.first { margin-top:33.600px; }
.sec:last-of-type { padding-left:10.500px; }
.sec:before {
  content:""; position:absolute; left:.5px; top:3.500px;
  border:3.500px solid transparent; border-top:4.500px solid #808080; border-bottom:0;
}

ul { list-style:none; margin:0; padding:0; }
li {
  display:flex; align-items:center;
  height:16.330px; padding:2px 2px 0 0;
  box-sizing:border-box;
  border-bottom:1px solid #e7e7e7;
  white-space:nowrap;
}
.drag { width:5px; height:5px; margin-left:2.500px; flex:none; }
.tick { width:10px; height:10px; margin-left:4.500px; flex:none; }
li span { margin-left:4px; font-size:6px; color:#555; }
li b { margin-left:5px; font-size:5px; font-weight:normal; color:#d433e6; }
li i { margin-left:auto; font-size:5.100px; font-style:normal; color:#aeaeae; }
.chev { width:4px; height:7px; margin-left:13px; flex:none; }
li .caret { width:1px; height:14px; background:#a020d8; margin-left:5px; }

/* task detail */
.detail { width:230px; margin-left:6.500px; flex:none; align-self:flex-start; }
.d-head {
  display:flex; align-items:center; gap:8px;
  height:23px; padding:1px 9px 0;
  background:#fff;
  border-bottom:1px solid #e8e8e8;
  box-sizing:border-box;
}
.pill {
  display:flex; align-items:center;
  width:59px; height:18px; flex:none;
  box-sizing:border-box;
  background:#fff;
  border:1px solid #c4c4c4; border-radius:9px;
}
.pill svg { width:16px; height:16px; flex:none; }
.pill span { flex:1; text-align:center; font-size:5.500px; color:#6e6e6e; white-space:nowrap; }
.d-tools { display:flex; gap:6px; margin-left:auto; }
.d-tools svg, .d-tools em {
  width:14px; height:14px; padding:2px;
  box-sizing:border-box;
  background:#f6f6f6; border-radius:50%;
  box-shadow:0 0 2px rgba(0,0,0,.25);
}
.d-tools em {
  font-style:normal; font-size:8px; line-height:8px; font-weight:bold;
  color:#888; text-align:center; padding:2px 0 0; letter-spacing:.3px;
}
.strip {
  height:16px; margin-top:1px; padding-left:16px;
  background:#f0eff3;
  font-size:5px; line-height:16.500px; color:#6e6e6e;
  white-space:nowrap;
}
.d-body { height:165px; background:#fff; box-sizing:border-box; }
.task {
  min-height:76px; padding:13px 9px 13px;
  box-sizing:border-box;
  border-bottom:1px solid #e8e8e8;
}
.t-proj { font-size:5.800px; line-height:8px; color:#6e6e6e; white-space:nowrap; }
.t-name {
  display:flex; align-items:center; gap:4px;
  height:14px; margin-top:7.700px;
  font-size:7.800px; color:#767676; white-space:nowrap;
}
.t-name svg { width:14px; height:14px; flex:none; }
.t-desc {
  margin:5.500px 0 0 18px;
  font-size:6.100px; line-height:7px; color:#808080;
  white-space:nowrap;
}
.d-comment {
  display:flex; align-items:flex-start;
  height:71px; padding:0 8.700px 0 8px;
  box-sizing:border-box;
  background:#f0eff3;
  border-bottom:1px solid #e4e4e6;
}
.c-av { width:17px; height:17px; margin-top:8.500px; flex:none; }
.c-box {
  display:flex; flex-direction:column;
  width:188px; height:46px; margin:12.700px 0 0 8px;
  padding:5px 3px 3px 4px;
  box-sizing:border-box; flex:none;
  background:#fff;
  border:1px solid #b4b4b4; border-radius:2px;
  font-size:5.500px; line-height:7px; color:#b4b4b4;
}
.c-box button {
  align-self:flex-end;
  width:47px; height:13px; margin-top:auto; padding:0;
  background:#e2e2e2;
  border:1px solid #d6d6d6; border-radius:1px;
  font:5.800px "Liberation Sans", Arial, sans-serif;
  color:#a5a5a5;
}
.d-foot {
  display:flex; align-items:center; gap:8px;
  height:26px; padding:0 9px 0 7px;
  box-sizing:border-box;
  background:#f0eff3;
}
.d-foot > svg { width:15px; height:15px; flex:none; }
.follow { margin-left:auto; display:flex; align-items:center; gap:2px; font-size:6.400px; color:#777; }
.follow svg { width:5px; height:6px; }

.thin .title { line-height:29.500px; letter-spacing:.85px; }
.thin .side { padding-top:10px; }
.thin .topbar { border-bottom:1px solid #9c9c9c; height:20px; }
.thin .side-rule { height:1px; margin-bottom:1px; background:#999; }
.thin .subhead { height:28.700px; }
```
